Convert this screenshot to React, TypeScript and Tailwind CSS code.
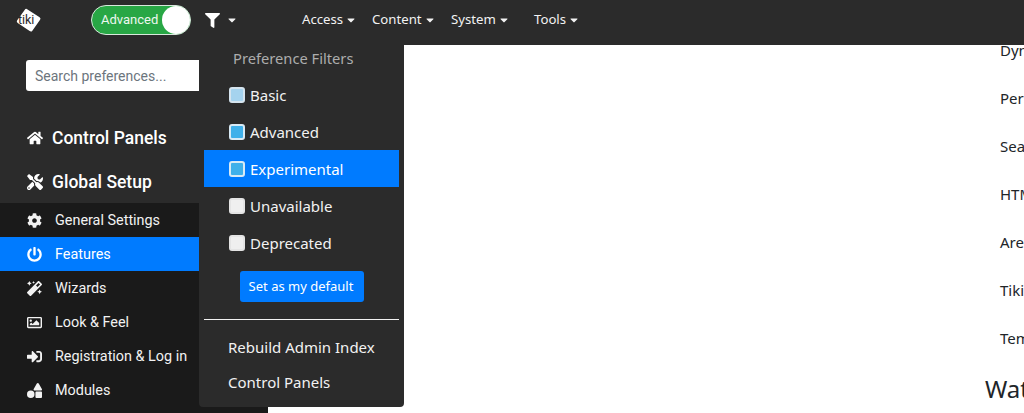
import { FaCaretDown, FaCog, FaFilter, FaHome, FaMagic, FaPowerOff, FaRegImage, FaShapes, FaSignInAlt, FaTools } from "react-icons/fa";
import type { IconType } from "react-icons";

const sideItems: { label: string; icon: IconType; active?: boolean }[] = [
  { label: "General Settings", icon: FaCog },
  { label: "Features", icon: FaPowerOff, active: true },
  { label: "Wizards", icon: FaMagic },
  { label: "Look & Feel", icon: FaRegImage },
  { label: "Registration & Log in", icon: FaSignInAlt },
  { label: "Modules", icon: FaShapes },
];

const filters = [
  { label: "Basic", box: "bg-[#a5d3ee] border-[#d5e4ee]" },
  { label: "Advanced", box: "bg-[#3fb0ea] border-[#d8eaf5]" },
  { label: "Experimental", box: "bg-[#3fb0ea] border-[#d8eaf5]", active: true },
  { label: "Unavailable", box: "bg-[#efefef] border-[#e4e4e4]" },
  { label: "Deprecated", box: "bg-[#efefef] border-[#e4e4e4]" },
];

const rightRows = ["Dynamic", "Personal", "Search", "HTML", "Area", "Tiki", "Temp"];

function NavLink({ label, className }: { label: string; className: string }) {
  return (
    <a className={`flex items-center gap-[2px] ${className}`}>
      {label}
      <FaCaretDown className="size-[12px]" />
    </a>
  );
}

export default function App() {
  return (
    <div className="relative h-[413px] w-[1024px] overflow-hidden bg-white font-['Noto_Sans',sans-serif] text-[15px]">
      {/* Top bar */}
      <header className="flex h-[45px] items-center bg-[#2b2b2b] pb-[5px] text-[13.2px] text-[#f2f2f2]">
        <svg viewBox="0 0 28 28" className="ml-[15px] size-[27px]">
          <path d="M13 2.5 25.5 10.5a2 2 0 0 1 .5 2.8L18 24.5a2 2 0 0 1-2.8.5L2.8 16.5a2 2 0 0 1-.5-2.8L10 3a2 2 0 0 1 3-.5Z" fill="#fff" />
          <text x="3" y="18" fontSize="13" fontFamily="Roboto, sans-serif" fill="#2b2b2b">tiki</text>
        </svg>
        <div className="relative ml-[49px] flex h-[30px] w-[100px] items-center rounded-full border border-[#d8e8dc] bg-[#28a745] pl-[9px] text-[13px] text-[#eef7f0] font-['Roboto',sans-serif]">
          Advanced
          <span className="absolute right-0 top-0 size-[28px] rounded-full bg-white" />
        </div>
        <FaFilter className="ml-[14px] size-[15px] text-white" />
        <FaCaretDown className="ml-[6px] size-[12px] text-[#f2f2f2]" />
        <nav className="ml-[64px] flex items-center">
          <NavLink label="Access" className="w-[70px]" />
          <NavLink label="Content" className="w-[79px]" />
          <NavLink label="System" className="w-[83px]" />
          <NavLink label="Tools" className="" />
        </nav>
      </header>

      <div className="flex h-[368px]">
        {/* Sidebar */}
        <aside className="flex w-[268px] shrink-0 flex-col bg-[#2b2b2b] font-['Roboto',sans-serif]">
          <input
            readOnly
            placeholder="Search preferences..."
            className="ml-[26px] mt-[15px] h-[31px] w-[190px] rounded-[3px] bg-white px-[9px] text-[14px] text-[#6c757d] placeholder:text-[#6c757d]"
          />
          <div className="mt-[25px] flex h-[44px] items-center pl-[27px] text-[17.5px] font-medium text-white">
            <FaHome className="size-[16px]" />
            <span className="ml-[9px]">Control Panels</span>
          </div>
          <div className="flex h-[43px] items-center pt-[1px] pl-[27px] text-[17.5px] font-medium text-white">
            <FaTools className="size-[16px]" />
            <span className="ml-[9px]">Global Setup</span>
          </div>
          <ul className="flex-1 bg-[#1a1a1a] text-[14.4px] text-[#f2f2f2]">
            {sideItems.map(item => (
              <li key={item.label} className={`flex h-[34px] items-center pt-[1px] pl-[27px] ${item.active ? "bg-[#007bff] text-white" : ""}`}>
                <item.icon className="size-[15px]" />
                <span className="ml-[13px]">{item.label}</span>
              </li>
            ))}
          </ul>
        </aside>

        {/* Page content, mostly hidden behind the menu */}
        <main className="min-w-0 flex-1 overflow-hidden text-[15px] text-[#212529]">
          <div className="-mt-[19px] ml-[732px] w-[200px]">
            {rightRows.map(row => (
              <p key={row} className="flex h-[48px] items-center">{row}</p>
            ))}
            <h3 className="-ml-[15px] mt-[13px] text-[24px] leading-[28px]">Watershed</h3>
          </div>
        </main>
      </div>

      {/* Preference filters dropdown */}
      <div className="absolute left-[199px] top-[45px] flex h-[362px] w-[205px] flex-col rounded-b-[4px] bg-[#2b2b2b] pl-[5px] pr-[5px] text-[#f2f2f2]">
        <div className="mt-[4px] h-[19px] pl-[29px] text-[14.7px] leading-[19px] text-[#adadad]">Preference Filters</div>
        <div className="mt-[8px]">
          {filters.map(f => (
            <label key={f.label} className={`flex h-[37px] items-center pl-[25px] ${f.active ? "bg-[#007bff] text-white" : ""}`}>
              <span className={`size-[16px] rounded-[3px] border-2 ${f.box}`} />
              <span className="ml-[5px] mt-[1px]">{f.label}</span>
            </label>
          ))}
        </div>
        <button className="ml-[36px] mt-[10px] h-[31px] w-[124px] rounded-[3px] bg-[#007bff] pr-[2px] text-[13px] text-white">
          Set as my default
        </button>
        <hr className="mt-[17px] border-t border-[#f2f2f2]" />
        <div className="mt-[10px] flex h-[35px] items-center pl-[24px]">Rebuild Admin Index</div>
        <div className="flex h-[35px] items-center pl-[24px]">Control Panels</div>
      </div>
    </div>
  );
}
